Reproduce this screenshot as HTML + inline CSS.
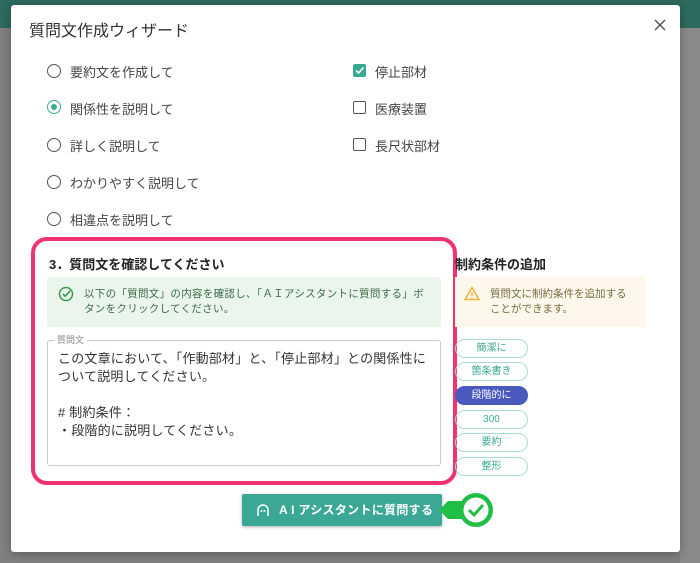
<!DOCTYPE html>
<html><head><meta charset="utf-8"><style>
*{box-sizing:border-box;margin:0;padding:0}
body{width:700px;height:563px;overflow:hidden;background:#808080;font-family:"Liberation Sans","Noto Sans CJK JP",sans-serif;position:relative;color:#333}
.top{position:absolute;left:0;top:0;width:700px;height:28px;background:#2e6a5e}
.bgr{position:absolute;left:680px;top:28px;width:20px;height:535px;background:#8a8a8a}
.modal{position:absolute;left:11px;top:5px;width:669px;height:547px;background:#fff;border-radius:3px;box-shadow:0 2px 10px rgba(0,0,0,.3)}
.a{position:absolute;white-space:nowrap}
.t{font-size:13px;color:#444}
.radio{position:absolute;width:14px;height:14px;border:1.5px solid #555;border-radius:50%}
.radio.on{border-color:#3aa894}
.radio.on:after{content:"";position:absolute;left:2.5px;top:2.5px;width:6px;height:6px;border-radius:50%;background:#3aa894}
.cb{position:absolute;width:13px;height:13px;border:1.5px solid #555;border-radius:2px}
.chip{position:absolute;left:455px;width:73px;height:19px;border:1.5px solid #a8dccf;border-radius:10px;color:#3aa894;font-size:10px;text-align:center;line-height:16px;display:flex;align-items:center;justify-content:center}
</style></head><body>
<div class="top"></div><div class="bgr"></div>
<div class="modal"></div>
<div class="a" style="left:29px;top:17px;font-size:16px;color:#333">質問文作成ウィザード</div>
<svg class="a" style="left:654px;top:19px" width="12" height="12"><path d="M1 1l10 10M11 1L1 11" stroke="#555" stroke-width="1.5"/></svg>

<div class="radio" style="left:47px;top:64px"></div><div class="a t" style="left:70px;top:62px">要約文を作成して</div>
<div class="radio on" style="left:47px;top:100px"></div><div class="a t" style="left:70px;top:99px">関係性を説明して</div>
<div class="radio" style="left:47px;top:138px"></div><div class="a t" style="left:70px;top:136px">詳しく説明して</div>
<div class="radio" style="left:47px;top:175px"></div><div class="a t" style="left:70px;top:173px">わかりやすく説明して</div>
<div class="radio" style="left:47px;top:212px"></div><div class="a t" style="left:70px;top:210px">相違点を説明して</div>

<div class="cb" style="left:353px;top:64px;background:#3aa894;border-color:#3aa894"><svg width="11" height="11" style="position:absolute;left:0;top:0"><path d="M2 5.5l2.5 2.5 5-5.5" stroke="#fff" stroke-width="1.6" fill="none"/></svg></div>
<div class="a t" style="left:375px;top:62px">停止部材</div>
<div class="cb" style="left:353px;top:101px"></div><div class="a t" style="left:375px;top:99px">医療装置</div>
<div class="cb" style="left:353px;top:138px"></div><div class="a t" style="left:375px;top:136px">長尺状部材</div>

<div class="a" style="left:31px;top:237px;width:426px;height:248px;border:4px solid #f0336e;border-radius:16px"></div>
<div class="a" style="left:49px;top:254px;font-size:13px;font-weight:bold;color:#222">3．質問文を確認してください</div>
<div class="a" style="left:47px;top:277px;width:394px;height:50px;background:#eaf5ec;border-radius:2px"></div>
<svg class="a" style="left:58px;top:286px" width="16" height="16"><circle cx="8" cy="8" r="6.5" stroke="#3c9a4c" stroke-width="1.5" fill="none"/><path d="M5 8l2.2 2.2 5-5.5" stroke="#3c9a4c" stroke-width="1.6" fill="none"/></svg>
<div class="a" style="left:84px;top:287px;font-size:10.5px;color:#3b6b45;line-height:15px;white-space:normal;width:340px;letter-spacing:0.3px">以下の「質問文」の内容を確認し、「ＡＩアシスタントに質問する」ボタンをクリックしてください。</div>

<div class="a" style="left:47px;top:340px;width:394px;height:126px;border:1px solid #ccc;border-radius:3px"></div>
<div class="a" style="left:54px;top:333px;background:#fff;padding:0 3px;font-size:9px;color:#888">質問文</div>
<div class="a" style="left:58px;top:350px;font-size:13px;line-height:18px;color:#333;white-space:normal;width:372px;letter-spacing:0.2px">この文章において、「作動部材」と、「停止部材」との関係性について説明してください。<br><br># 制約条件：<br>・段階的に説明してください。</div>

<div class="a" style="left:455px;top:254px;font-size:13px;font-weight:bold;color:#222">制約条件の追加</div>
<div class="a" style="left:455px;top:277px;width:191px;height:50px;background:#fef8ec"></div>
<svg class="a" style="left:464px;top:286px" width="16" height="15"><path d="M8 1.5L15 13.5H1z" stroke="#f0b030" stroke-width="1.4" fill="none"/><path d="M8 6v4M8 11.5v1" stroke="#f0b030" stroke-width="1.4"/></svg>
<div class="a" style="left:490px;top:287px;font-size:10.5px;color:#7a6a40;line-height:15px">質問文に制約条件を追加する<br>ことができます。</div>
<div class="chip" style="top:339px">簡潔に</div>
<div class="chip" style="top:362px">箇条書き</div>
<div class="chip" style="top:386px;background:#4a59be;border-color:#4a59be;color:#fff">段階的に</div>
<div class="chip" style="top:410px">300</div>
<div class="chip" style="top:433px">要約</div>
<div class="chip" style="top:457px">整形</div>

<div class="a" style="left:242px;top:494px;width:200px;height:32px;background:#3aa894;border-radius:2px;box-shadow:0 1px 3px rgba(0,0,0,.3);color:#fff;font-size:12px;font-weight:bold;line-height:32px;padding-left:37px;letter-spacing:0.3px">A I アシスタントに質問する</div>
<svg class="a" style="left:256px;top:502px" width="14" height="16"><path d="M2 14V8a5 5 0 0 1 10 0v6" stroke="#fff" stroke-width="1.5" fill="none"/><circle cx="5.5" cy="9" r="1" fill="#fff"/><circle cx="8.5" cy="9" r="1" fill="#fff"/></svg>
<svg class="a" style="left:438px;top:490px" width="60" height="42"><path d="M1 20L10 11H30V29H10z" fill="#1fbf45"/><circle cx="38" cy="20" r="17" fill="#1fbf45"/><circle cx="38" cy="20" r="12.5" fill="#fff"/><path d="M31 20l5 5 9-10" stroke="#1fbf45" stroke-width="3" fill="none"/></svg>
</body></html>
